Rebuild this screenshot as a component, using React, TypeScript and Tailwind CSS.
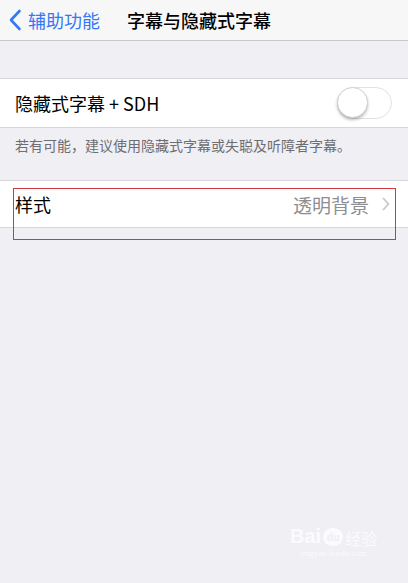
import React from "react";

const font = { fontFamily: '"Noto Sans CJK SC", "Noto Sans", sans-serif' };

export default function App() {
  return (
    <div className="relative w-[408px] h-[583px] bg-[#efeff4] overflow-hidden" style={font}>
      {/* Nav bar */}
      <div className="h-[41px] bg-[#f7f7f8] border-b border-[#c8c7cc] flex items-center">
        <svg className="ml-[8px]" width="14" height="22" viewBox="0 0 14 22">
          <path d="M11.5 2 L3 11 L11.5 20" fill="none" stroke="#3478f6" strokeWidth="2.6" strokeLinecap="round" strokeLinejoin="round" />
        </svg>
        <span className="ml-[6px] text-[18px] leading-none text-[#3478f6]">辅助功能</span>
        <span className="ml-[27px] text-[18px] leading-none font-medium text-black">字幕与隐藏式字幕</span>
      </div>

      <div className="h-[37px]" />

      {/* Toggle row */}
      <div className="h-[50px] bg-white border-y border-[#d6d6db] flex items-center justify-between pl-[15px] pr-[16px]">
        <span className="text-[18px] leading-none text-black">隐藏式字幕 + SDH</span>
        <div className="relative w-[55px] h-[32px] rounded-full border-[1.5px] border-[#e2e2e5] bg-white">
          <div className="absolute left-[-1px] top-[-1px] w-[31px] h-[31px] rounded-full bg-white border border-[#d0d0d4] shadow-[0_2px_3px_rgba(0,0,0,0.25)]" />
        </div>
      </div>

      {/* Footer */}
      <div className="h-[52px] px-[15px] pt-[7px] text-[14px] leading-[20px] text-[#6d6d72]">
        若有可能，建议使用隐藏式字幕或失聪及听障者字幕。
      </div>

      {/* Style row */}
      <div className="h-[48px] bg-white border-y border-[#d6d6db] flex items-center justify-between pl-[15px] pr-[18px]">
        <span className="text-[18px] leading-none text-black">样式</span>
        <div className="flex items-center">
          <span className="text-[19px] leading-none text-[#8e8e93]">透明背景</span>
          <svg className="ml-[13px]" width="8" height="14" viewBox="0 0 8 14">
            <path d="M1.5 1.5 L6.5 7 L1.5 12.5" fill="none" stroke="#c7c7cc" strokeWidth="1.8" strokeLinecap="round" strokeLinejoin="round" />
          </svg>
        </div>
      </div>

      {/* Red highlight box */}
      <div className="absolute left-[13px] top-[188px] w-[383px] h-[52px] border border-[#d3383e]" />

      {/* Watermark */}
      <div className="absolute left-[290px] top-[526px] flex flex-col items-center text-[#fbfbfd]">
        <div className="flex items-end">
          <span className="text-[20px] font-bold leading-none" style={{ fontFamily: '"Liberation Sans", sans-serif' }}>Bai</span>
          <span className="mx-[2px] w-[20px] h-[18px] rounded-full bg-[#fbfbfd] text-[#efeff4] text-[10px] font-bold leading-[18px] text-center">du</span>
          <span className="text-[16px] leading-none">经验</span>
        </div>
        <span className="text-[9px] leading-none mt-[3px]" style={{ fontFamily: '"Liberation Serif", serif' }}>jingyan.baidu.com</span>
      </div>
    </div>
  );
}
